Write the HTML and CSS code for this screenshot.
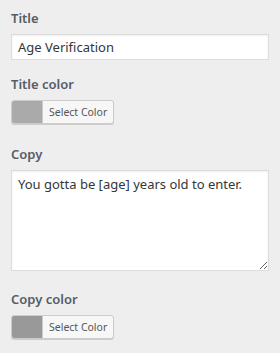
FILE: index.html
```html
<!DOCTYPE html>
<html lang="en">
<head>
    <meta charset="UTF-8">
    <title>Age Verification settings</title>
    <link rel="stylesheet" href="styles.css">
</head>
<body>
    <div class="panel">
        <div class="field">
            <label class="field-label" for="title">Title</label>
            <input id="title" class="text-input" type="text" value="Age Verification">
        </div>
        <div class="field field-color">
            <span class="field-label">Title color</span>
            <button class="color-result" type="button">
                <span class="swatch swatch-title"></span>
                <span class="color-text">Select Color</span>
            </button>
        </div>
        <div class="field field-copy">
            <label class="field-label" for="copy">Copy</label>
            <textarea id="copy" class="text-area">You gotta be [age] years old to enter.</textarea>
        </div>
        <div class="field">
            <span class="field-label">Copy color</span>
            <button class="color-result" type="button">
                <span class="swatch swatch-copy"></span>
                <span class="color-text">Select Color</span>
            </button>
        </div>
    </div>
</body>
</html>
```

FILE: styles.css
```css
body {
    margin: 0;
    background-color: #eeeeee;
    font-family: 'Noto Sans', 'Open Sans', sans-serif;
    color: #32373c;
}
.panel {
    padding: 9px 11px 0 11px;
}
.field {
    margin-bottom: 15px;
}
.field-color {
    margin-bottom: 21px;
}
.field-copy {
    margin-bottom: 19px;
}
.field-label {
    display: block;
    font-size: 13px;
    line-height: 18px;
    font-weight: 600;
    color: #555d66;
    margin-bottom: 7px;
}
.text-input,
.text-area {
    display: block;
    box-sizing: border-box;
    width: 258px;
    margin: 0;
    border: 1px solid #dddddd;
    background-color: #ffffff;
    box-shadow: inset 0 1px 2px rgba(0,0,0,0.07);
    font-family: inherit;
    font-size: 13px;
    color: #32373c;
}
.text-input {
    height: 26px;
    padding: 0 6px;
}
.text-area {
    height: 101px;
    padding: 3px 6px;
    line-height: 20px;
    resize: vertical;
}
.color-result {
    display: flex;
    height: 24px;
    padding: 0;
    margin: 0;
    border: 1px solid #cccccc;
    border-radius: 3px;
    box-shadow: 0 1px 0 #cccccc;
    background-color: #f7f7f7;
    overflow: hidden;
    font-family: inherit;
    cursor: pointer;
}
.swatch {
    width: 30px;
    height: 100%;
}
.swatch-title {
    background-color: #aaaaaa;
}
.swatch-copy {
    background-color: #999999;
}
.color-text {
    display: flex;
    align-items: center;
    height: 100%;
    padding: 0 6px;
    border-left: 1px solid #cccccc;
    font-size: 10.5px;
    color: #555555;
}
```
